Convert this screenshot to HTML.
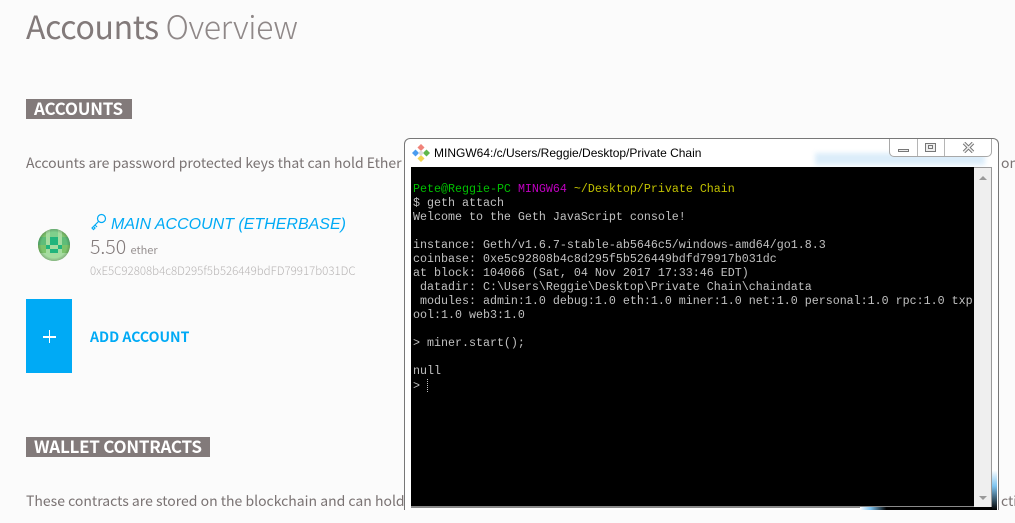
<!DOCTYPE html>
<html><head><meta charset="utf-8"><style>
html,body{margin:0;padding:0;background:#fbfbfb}
#p{position:relative;width:1015px;height:523px;overflow:hidden;background:#fbfbfb;font-family:"Noto Sans CJK JP","Liberation Sans",sans-serif;color:#827a7a}
#p div,#p span.a,#p svg{position:absolute}
.t{white-space:nowrap;line-height:1}
.tag{background:#827a7a;color:#fff;font-weight:700;font-size:17px;height:20px;line-height:18px;letter-spacing:-.25px;white-space:nowrap;box-sizing:border-box;padding-left:8px}
.m{position:absolute;left:413px;font:11.67px/14px "Liberation Mono",monospace;color:#c0c0c0;white-space:pre}
</style></head><body><div id="p">
<div class="t" style="left:26px;top:10px;font-size:32px;font-weight:400;letter-spacing:-.35px;color:#827a7a">Accounts <span style="font-weight:300;color:#8f8888">Overview</span></div>
<div class="tag" style="left:26px;top:99px;width:106px">ACCOUNTS</div>
<div class="t" style="left:26px;top:156px;font-size:14px;font-weight:400;color:#7a7373">Accounts are password protected keys that can hold Ether</div>
<svg style="left:90px;top:213px" width="17" height="18" viewBox="0 0 17 18" fill="none" stroke="#00aaf5" stroke-width="1.2"><circle cx="11.5" cy="5.5" r="4"/><path d="M8.5 8.5 L2 15 L3.5 16.5 L5 15 L4 14 M5 12 L7 14"/></svg>
<div class="t" style="left:111px;top:216px;font:italic 16px/17px 'Liberation Sans',sans-serif;color:#00aaf5">MAIN ACCOUNT (ETHERBASE)</div>
<svg style="left:38px;top:229px" width="32" height="32" viewBox="0 0 32 32" shape-rendering="crispEdges"><defs><clipPath id="c"><circle cx="16" cy="16" r="16"/></clipPath><radialGradient id="g" cx=".5" cy=".5" r=".5"><stop offset=".8" stop-color="#000" stop-opacity="0"/><stop offset="1" stop-color="#000" stop-opacity=".2"/></radialGradient></defs><g clip-path="url(#c)"><rect width="32" height="32" fill="#7fc56e"/><rect x="8" width="16" height="32" fill="#a5dc9f"/><rect x="12" y="0" width="8" height="8" fill="#7fcf8c"/><rect x="0" y="8" width="8" height="8" fill="#5fbd78"/><rect x="24" y="8" width="8" height="8" fill="#5fbd78"/><rect x="12" y="8" width="8" height="8" fill="#22b47c"/><rect x="8" y="16" width="4" height="4" fill="#22b47c"/><rect x="20" y="16" width="4" height="4" fill="#22b47c"/><rect x="12" y="20" width="8" height="4" fill="#22b47c"/><rect x="0" y="16" width="8" height="8" fill="#7cc36a"/><rect x="24" y="16" width="8" height="8" fill="#7cc36a"/><rect x="0" y="24" width="32" height="8" fill="#a5dc9f"/><rect width="32" height="32" fill="url(#g)"/></g></svg>
<div class="t" style="left:90px;top:236px;font-size:19.5px;font-weight:300;color:#827a7a">5.50 <span style="font-size:11px;font-weight:400;color:#969090">ether</span></div>
<div class="t" style="left:90px;top:266px;font-size:11.5px;font-weight:300;color:#b8b5b5">0xE5C92808b4c8D295f5b526449bdFD79917b031DC</div>
<div style="left:26px;top:299px;width:46px;height:74px;background:#00aaf5"></div>
<div style="left:43px;top:336px;width:13px;height:1.5px;background:#fff"></div>
<div style="left:48.7px;top:330px;width:1.5px;height:13px;background:#fff"></div>
<div class="t" style="left:90px;top:330px;font-size:14.1px;font-weight:700;color:#00aaf5">ADD ACCOUNT</div>
<div class="tag" style="left:26px;top:437px;width:184px">WALLET CONTRACTS</div>
<div class="t" style="left:26px;top:494px;font-size:14px;font-weight:400;color:#7a7373">These contracts are stored on the blockchain and can hold</div>
<div class="t" style="left:1001px;top:156px;font-size:14px;font-weight:400;color:#7a7373">on</div>
<div class="t" style="left:1001px;top:494px;font-size:14px;font-weight:400;color:#7a7373">cti</div>

<div style="left:404px;top:138px;width:595px;height:372px;box-sizing:border-box;background:#fff;border:1.5px solid #777;border-radius:6px 6px 0 0;border-bottom:0"></div>
<div style="left:815px;top:153px;width:170px;height:12px;background:#dcedfa;filter:blur(2.5px)"></div>
<div style="left:889px;top:139px;width:103px;height:18px;box-sizing:border-box;background:#fff;border:1px solid #a8a8a8;border-top:0;border-radius:0 0 5px 5px"></div>
<div style="left:917px;top:139px;width:1px;height:17px;background:#b5b5b5"></div>
<div style="left:944px;top:139px;width:1px;height:17px;background:#b5b5b5"></div>
<div style="left:898px;top:149px;width:11px;height:3px;box-sizing:border-box;border:1px solid #777;background:#eee"></div>
<div style="left:925px;top:143px;width:11px;height:9px;box-sizing:border-box;border:1px solid #777;background:#eee"></div>
<div style="left:928px;top:145px;width:5px;height:4px;box-sizing:border-box;border:1px solid #777"></div>
<svg style="left:962px;top:142px" width="13" height="11" viewBox="0 0 13 11"><path d="M2 1 L11 10 M11 1 L2 10" stroke="#777" stroke-width="3.4"/><path d="M2 1 L11 10 M11 1 L2 10" stroke="#f2f2f2" stroke-width="1.4"/></svg>
<svg style="left:412px;top:144px" width="18" height="18" viewBox="0 0 18 18"><rect x="6.5" y="1" width="5" height="5" transform="rotate(45 9 3.5)" fill="#f0837a"/><rect x="1" y="6.5" width="5" height="5" transform="rotate(45 3.5 9)" fill="#4a9cf0"/><rect x="12" y="6.5" width="5" height="5" transform="rotate(45 14.5 9)" fill="#5fb84a"/><rect x="6.5" y="12" width="5" height="5" transform="rotate(45 9 14.5)" fill="#f2d552"/><rect x="7" y="7" width="4" height="4" transform="rotate(45 9 9)" fill="#ddd"/></svg>
<div class="t" style="left:434px;top:147px;font:12px/13px 'Liberation Sans',sans-serif;color:#000">MINGW64:/c/Users/Reggie/Desktop/Private Chain</div>
<div style="left:411px;top:167px;width:563px;height:339px;background:#000"></div>
<div style="left:411px;top:506px;width:581px;height:1.5px;background:#8a8a8a"></div>
<div style="left:974px;top:167px;width:17px;height:339px;background:#efefef;border-right:1px solid #9a9a9a;border-top:1px solid #9a9a9a"></div>
<div style="left:979px;top:176px;width:0;height:0;border:4px solid transparent;border-bottom-color:#9a9a9a;border-top:0"></div>
<div style="left:979px;top:496px;width:0;height:0;border:4px solid transparent;border-top-color:#9a9a9a;border-bottom:0"></div>
<div style="left:860px;top:507px;width:132px;height:3px;background:linear-gradient(90deg,#fff 0,#7ec4f0 8%,#000 20%,#000 100%)"></div>
<div style="left:992px;top:470px;width:5px;height:40px;background:linear-gradient(180deg,#fff,#7ec4f0 40%,#000)"></div>

<span class="m" style="top:182px;color:#00c000">Pete@Reggie-PC <span style="color:#c000c0">MINGW64</span> <span style="color:#c0c000">~/Desktop/Private Chain</span></span>
<span class="m" style="top:196px">$ geth attach</span>
<span class="m" style="top:210px">Welcome to the Geth JavaScript console!</span>
<span class="m" style="top:238px">instance: Geth/v1.6.7-stable-ab5646c5/windows-amd64/go1.8.3</span>
<span class="m" style="top:252px">coinbase: 0xe5c92808b4c8d295f5b526449bdfd79917b031dc</span>
<span class="m" style="top:266px">at block: 104066 (Sat, 04 Nov 2017 17:33:46 EDT)</span>
<span class="m" style="top:280px"> datadir: C:\Users\Reggie\Desktop\Private Chain\chaindata</span>
<span class="m" style="top:294px"> modules: admin:1.0 debug:1.0 eth:1.0 miner:1.0 net:1.0 personal:1.0 rpc:1.0 txp</span>
<span class="m" style="top:308px">ool:1.0 web3:1.0</span>
<span class="m" style="top:336px">&gt; miner.start();</span>
<span class="m" style="top:364px">null</span>
<span class="m" style="top:379px">&gt;</span>
<div style="left:427px;top:379px;width:0;height:13px;border-left:1px dotted #c0c0c0"></div>
</div></body></html>
